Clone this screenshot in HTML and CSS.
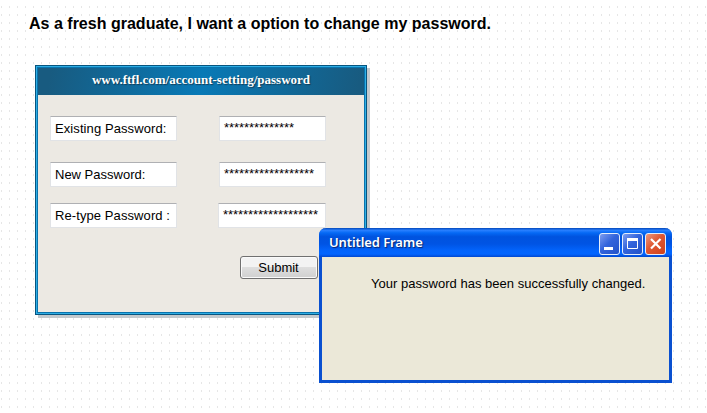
FILE: index.html
```html
<!DOCTYPE html>
<html lang="en">
<head>
<meta charset="utf-8">
<title>Change password</title>
<link rel="stylesheet" href="styles.css">
</head>
<body>
<main class="canvas">
  <h1 class="story">As a fresh graduate, I want a option to change my password.</h1>
  <section class="window">
    <header class="window-title"><span>www.ftfl.com/account-setting/password</span></header>
    <form class="form">
      <div class="row"><div class="field label">Existing Password:</div><div class="field secret">**************</div></div>
      <div class="row row-new"><div class="field">New Password:</div><div class="field secret">******************</div></div>
      <div class="row row-retype"><div class="field label">Re-type Password :</div><div class="field secret wide">*******************</div></div>
      <button class="submit" type="button">Submit</button>
    </form>
  </section>
  <section class="dialog">
    <header class="dialog-title">
      <span class="caption">Untitled Frame</span>
      <div class="controls">
        <svg class="control" viewBox="1 1 19 20"><path d="M5 15.5h9" stroke="#fff" stroke-width="3"/></svg>
        <svg class="control" viewBox="1 1 19 20"><path d="M5.5 6v9.5h10V6" fill="none" stroke="#fff"/><path d="M5 6.5h11" stroke="#fff" stroke-width="3"/></svg>
        <svg class="control close" viewBox="1 1 19 20"><path d="M6 6l9.5 9.5M15.5 6L6 15.5" stroke="#fff" stroke-width="2.2"/></svg>
      </div>
    </header>
    <p class="message">Your password has been successfully changed.</p>
  </section>
</main>
</body>
</html>
```
FILE: styles.css
```css
* { box-sizing: border-box; }
body { margin: 0; background: #fff; font-family: "Liberation Sans", Arial, sans-serif; color: #000; }
.canvas {
  position: relative; height: 413px; overflow: hidden; padding: 15px 0 0 29px;
  background: conic-gradient(from 90deg at 7px 6px, #e6e6e6 90deg, #fff 0) 2px 8px / 8px 8px;
}
.story { margin: 0; font-size: 16px; line-height: 18px; font-weight: bold; white-space: nowrap; letter-spacing: 0.01px; }
.window {
  position: absolute; left: 35px; top: 65px; width: 332px; height: 250px;
  border: 1px solid #07557f; background: #ece9e3;
  box-shadow: inset 0 0 0 1px #2eaee5, inset 0 0 0 2px #0873ad, 3px 3px 0 #c3c9cd;
  padding: 2px;
}
.window-title {
  height: 27px; display: flex; align-items: center; justify-content: center; padding-bottom: 4px;
  background: linear-gradient(100deg, #185b80 4%, #0879b6 50%, #185b80 98%);
  color: #fff; font: bold 13px/20px "Liberation Serif", serif; text-shadow: 1px 1px 1px #123f5a;
}
.form { padding: 21px 38px 0 12px; }
.row { display: flex; justify-content: space-between; height: 25px; }
.row-new { margin-top: 21px; }
.row-retype { margin-top: 16px; }
.field {
  width: 127px; height: 25px; padding: 0 4px; background: #fff;
  border: 1px solid #e1e3e6; border-top-color: #afb0b3;
  font-size: 13px; line-height: 23px; white-space: nowrap;
}
.label { letter-spacing: 0.09px; }
.secret { width: 107px; line-height: 21px; letter-spacing: -0.06px; }
.secret.wide { width: 108px; }
.submit {
  display: block; width: 78px; height: 23px; margin: 28px 0 0 190px; padding: 0 1px 0 0;
  border: 1px solid #707070; border-radius: 3px;
  background: linear-gradient(#f3f3f3 48%, #dedede 50%, #d0d0d0);
  box-shadow: inset 0 0 0 1px #fafafa; color: #000; font: 13px/20px "Liberation Sans", sans-serif;
}
.dialog {
  position: absolute; left: 319px; top: 228px; width: 353px; height: 155px;
  border: 3px solid #0a50d0; border-top: 0; border-radius: 7px 7px 0 0; background: #ebe8d8;
}
.dialog-title {
  display: flex; justify-content: space-between; margin: 0 -3px; height: 29px; padding: 5px 6px 0 10px;
  border-radius: 7px 7px 0 0;
  background: linear-gradient(#0447b8 0, #287fff 8%, #0569f5 17%, #0053df 30%, #0054e4 55%, #0264fc 78%, #0265ff 90%, #0147cf);
}
.caption { color: #fff; font: 600 13px/19px "Noto Sans", sans-serif; letter-spacing: -0.1px; text-shadow: 1px 1px 1px #0a246a; }
.controls { display: flex; gap: 2px; }
.control { width: 21px; height: 22px; border: 1px solid #e5eefc; border-radius: 3px; background: linear-gradient(135deg, #7e9df0, #3364dc 45%, #2252c8); }
.control.close { background: linear-gradient(135deg, #ed9a80, #df5732 45%, #cf421c); }
.message { margin: 18px 0 0 49px; font-size: 13px; line-height: 17px; letter-spacing: 0.02px; white-space: nowrap; }
```
